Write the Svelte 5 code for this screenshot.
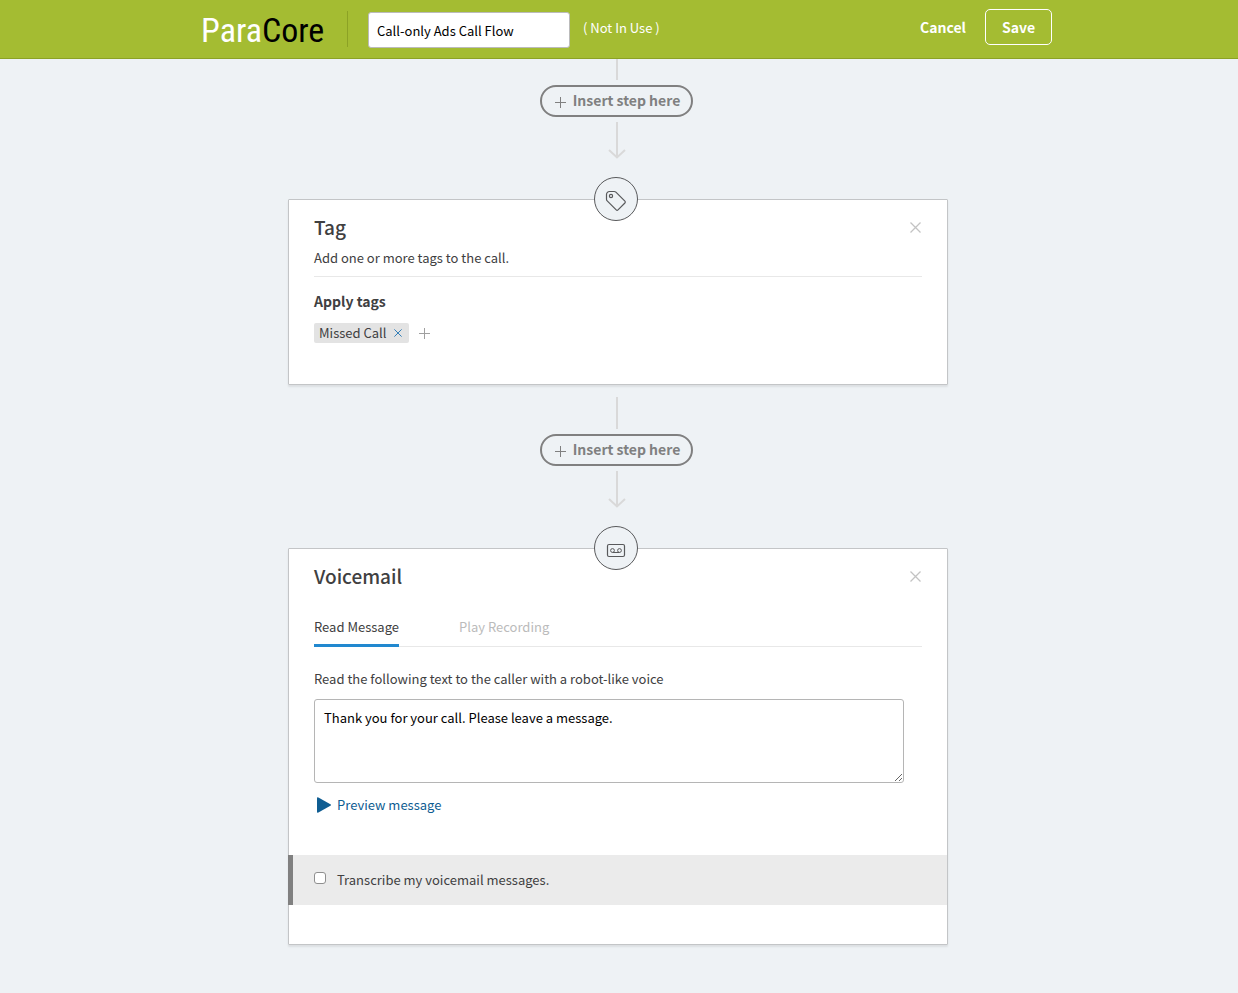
<script>
  let flowName = $state('Call-only Ads Call Flow');
  let message = $state('Thank you for your call. Please leave a message.');
  let tags = $state(['Missed Call']);
  let tab = $state('Read Message');
  let transcribe = $state(false);
  const tabs = ['Read Message', 'Play Recording'];
</script>

{#snippet cross(size)}
  <svg width={size} height={size} viewBox="0 0 11 11" fill="none" stroke="currentColor" stroke-width="1.300" aria-hidden="true">
    <path d="M.5.5l10 10M10.5.5l-10 10" />
  </svg>
{/snippet}

{#snippet plus()}
  <svg width="11" height="11" viewBox="0 0 11 11" fill="none" stroke="currentColor" aria-hidden="true">
    <path d="M5.5 0v11M0 5.5h11" />
  </svg>
{/snippet}

{#snippet connector(first)}
  <div class="connector" class:first>
    <span class="line"></span>
    <button class="insert" type="button">{@render plus()}<span>Insert step here</span></button>
    <svg class="arrow" width="18" height="37" viewBox="0 0 18 37" fill="none" stroke="#d9d9d9" stroke-width="2" aria-hidden="true">
      <path d="M9 0v35M1 28l8 7.500 8-7.500" />
    </svg>
  </div>
{/snippet}

<header>
  <div class="bar">
    <a class="logo" href="#home">Para<b>Core</b></a>
    <span class="divider"></span>
    <input class="name" type="text" aria-label="Call flow name" bind:value={flowName} />
    <span class="status">( Not In Use )</span>
    <a class="cancel" href="#cancel">Cancel</a>
    <button class="save" type="button">Save</button>
  </div>
</header>

<main>
  {@render connector(true)}
  <div class="badge">
    <svg width="22" height="22" viewBox="0 0 22 22" fill="none" stroke="#58595b" stroke-width="1.200" stroke-linejoin="round" aria-hidden="true">
      <path d="M1.500 4.500a3 3 0 0 1 3-3h4.700q1 0 1.700.7l9 9q.9.900 0 1.800l-6.900 6.900q-.9.900-1.800 0l-9-9q-.7-.7-.7-1.700z" />
      <circle cx="6" cy="6" r="1.600" />
    </svg>
  </div>
  <section class="card">
    <div class="head">
      <h2>Tag</h2>
      <button class="close" type="button" aria-label="Remove Tag step">{@render cross(11)}</button>
    </div>
    <p class="intro">Add one or more tags to the call.</p>
    <h3>Apply tags</h3>
    <div class="tags">
      {#each tags as tag}
        <span class="tag">
          {tag}
          <button type="button" aria-label="Remove {tag}" onclick={() => (tags = tags.filter((t) => t !== tag))}>{@render cross(8)}</button>
        </span>
      {/each}
      <button class="add" type="button" aria-label="Add tag">{@render plus()}</button>
    </div>
  </section>

  {@render connector(false)}
  <div class="badge">
    <svg width="22" height="22" viewBox="0 0 22 22" fill="none" stroke="#58595b" aria-hidden="true">
      <rect x="2.500" y="5.500" width="17" height="12" rx="1.500" stroke-width="1.200" />
      <circle cx="7.500" cy="11.500" r="1.900" />
      <circle cx="14.500" cy="11.500" r="1.900" />
      <path d="M7.500 13.500h7" />
    </svg>
  </div>
  <section class="card">
    <div class="head">
      <h2>Voicemail</h2>
      <button class="close" type="button" aria-label="Remove Voicemail step">{@render cross(11)}</button>
    </div>
    <div class="tabs" role="tablist">
      {#each tabs as t}
        <button type="button" role="tab" aria-selected={tab === t} class:active={tab === t} onclick={() => (tab = t)}>{t}</button>
      {/each}
    </div>
    <label class="prompt" for="message">Read the following text to the caller with a robot-like voice</label>
    <textarea id="message" bind:value={message}></textarea>
    <a class="preview" href="#preview">
      <svg width="14" height="16" viewBox="0 0 14 16" fill="#0f5d92" aria-hidden="true">
        <path d="M0 1.200Q0-.4 1.400.4L13.400 7.300q1.200.7 0 1.400L1.400 15.600Q0 16.400 0 14.800z" />
      </svg>
      Preview message
    </a>
    <label class="option">
      <input type="checkbox" bind:checked={transcribe} />
      <span>Transcribe my voicemail messages.</span>
    </label>
  </section>
</main>

<style>
  :global(body) {
    background: #eef2f5;
    color: #404041;
    font-family: "Noto Sans CJK SC", "Noto Sans", sans-serif;
    font-size: 13px;
    line-height: 20px;
  }
  button, input, textarea {
    font: inherit;
    color: inherit;
    box-sizing: border-box;
  }
  button {
    background: none;
    border: 0;
    padding: 0;
    cursor: pointer;
  }
  a { text-decoration: none; }
  svg { display: block; flex: none; }
  h2, h3, p { margin: 0; }

  header {
    background: #a4bc32;
    border-bottom: 1px solid #8ca225;
  }
  .bar {
    box-sizing: border-box;
    max-width: 866px;
    height: 58px;
    margin: 0 auto;
    padding-left: 15px;
    display: flex;
    align-items: center;
  }
  .logo {
    width: 122px;
    padding-top: 2px;
    color: #fff;
    font: 34px/40px "Roboto Condensed", "Liberation Sans Narrow", sans-serif;
  }
  .logo b {
    color: #000;
    font-weight: 400;
  }
  .divider {
    height: 36px;
    margin: 0 20px 0 24px;
    border-left: 1px solid #8ca225;
  }
  .name {
    width: 202px;
    height: 36px;
    padding: 0 8px;
    margin-top: 2px;
    border: 1px solid #bbb;
    border-radius: 3px;
    background: #fff;
    color: #000;
  }
  .status {
    margin: 0 0 2px 13px;
    color: #fff;
  }
  .cancel {
    margin: 0 0 4px auto;
    color: #fff;
    font-size: 14px;
    font-weight: 700;
  }
  .save {
    width: 67px;
    height: 36px;
    margin: 0 0 4px 19px;
    border: 1px solid #fff;
    border-radius: 5px;
    color: #fff;
    font-size: 14px;
    font-weight: 700;
  }

  main {
    max-width: 660px;
    margin: 0 auto;
    padding: 0 2px 48px 0;
  }
  .connector {
    display: flex;
    flex-direction: column;
    align-items: center;
    gap: 5px;
    padding: 12px 3px 18px 0;
  }
  .connector.first { padding-top: 0; }
  .line {
    width: 2px;
    height: 32px;
    background: #d9d9d9;
  }
  .first .line { height: 21px; }
  .insert {
    display: flex;
    align-items: center;
    gap: 7px;
    height: 32px;
    padding: 0 11px 0 13px;
    border: 2px solid #808080;
    border-radius: 16px;
    color: #808080;
    font-size: 14px;
    font-weight: 700;
  }
  .insert span { padding-bottom: 2px; }
  .insert :global(svg) { margin-top: 3px; }
  .badge {
    position: relative;
    display: grid;
    place-items: center;
    box-sizing: border-box;
    width: 44px;
    height: 44px;
    margin: 0 auto -22px;
    left: -2px;
    padding-top: 3px;
    border: 1px solid #58595b;
    border-radius: 50%;
    background: #eef2f5;
  }
  .card {
    display: flow-root;
    padding: 0 25px 39px;
    background: #fff;
    border: 1px solid #c3c5c7;
    border-radius: 1px;
    box-shadow: 0 2px 2px rgba(0, 0, 0, 0.08);
  }
  .head {
    display: flex;
    justify-content: space-between;
    align-items: center;
    margin-top: 14px;
  }
  h2 {
    font-size: 19px;
    line-height: 26px;
    font-weight: 500;
  }
  .close {
    color: #c3c3c3;
    padding: 1px;
  }
  .intro {
    padding: 8px 0;
    border-bottom: 1px solid #e8e8e8;
  }
  h3 {
    margin-top: 14px;
    font-size: 14px;
    line-height: 20px;
    font-weight: 700;
  }
  .tags {
    display: flex;
    align-items: center;
    gap: 10px;
    margin: 12px 0 2px;
  }
  .tag {
    display: flex;
    align-items: center;
    gap: 8px;
    height: 20px;
    padding: 0 7px 0 5px;
    border-radius: 2px;
    background: #e3e3e3;
  }
  .tag button { color: #2a7ab5; }
  .add { color: #a0a0a0; }

  .tabs {
    display: flex;
    gap: 60px;
    margin-top: 28px;
    border-bottom: 1px solid #e8e8e8;
  }
  .tabs button {
    padding-bottom: 7px;
    margin-bottom: -1px;
    border-bottom: 3px solid transparent;
    color: #bbb;
  }
  .tabs button.active {
    border-color: #2188cf;
    color: #404041;
  }
  .prompt {
    display: block;
    margin-top: 22px;
  }
  textarea {
    display: block;
    width: calc(100% - 18px);
    height: 84px;
    margin-top: 10px;
    padding: 8px 9px;
    border: 1px solid #b5b5b5;
    border-radius: 3px;
    background: #fff;
    color: #000;
    resize: both;
  }
  .preview {
    display: inline-flex;
    align-items: center;
    gap: 6px;
    margin: 12px 0 0 3px;
    color: #0f5d92;
  }
  .option {
    display: flex;
    align-items: center;
    gap: 11px;
    height: 50px;
    margin: 37px -25px 0 -26px;
    padding-left: 21px;
    border-left: 5px solid #808080;
    background: #ebebeb;
  }
  .option input {
    appearance: none;
    width: 12px;
    height: 12px;
    margin: 0 0 4px;
    border: 1px solid #8f8f8f;
    border-radius: 3px;
    background: #fff;
  }
  .option input:checked { background: #2188cf; }
</style>
